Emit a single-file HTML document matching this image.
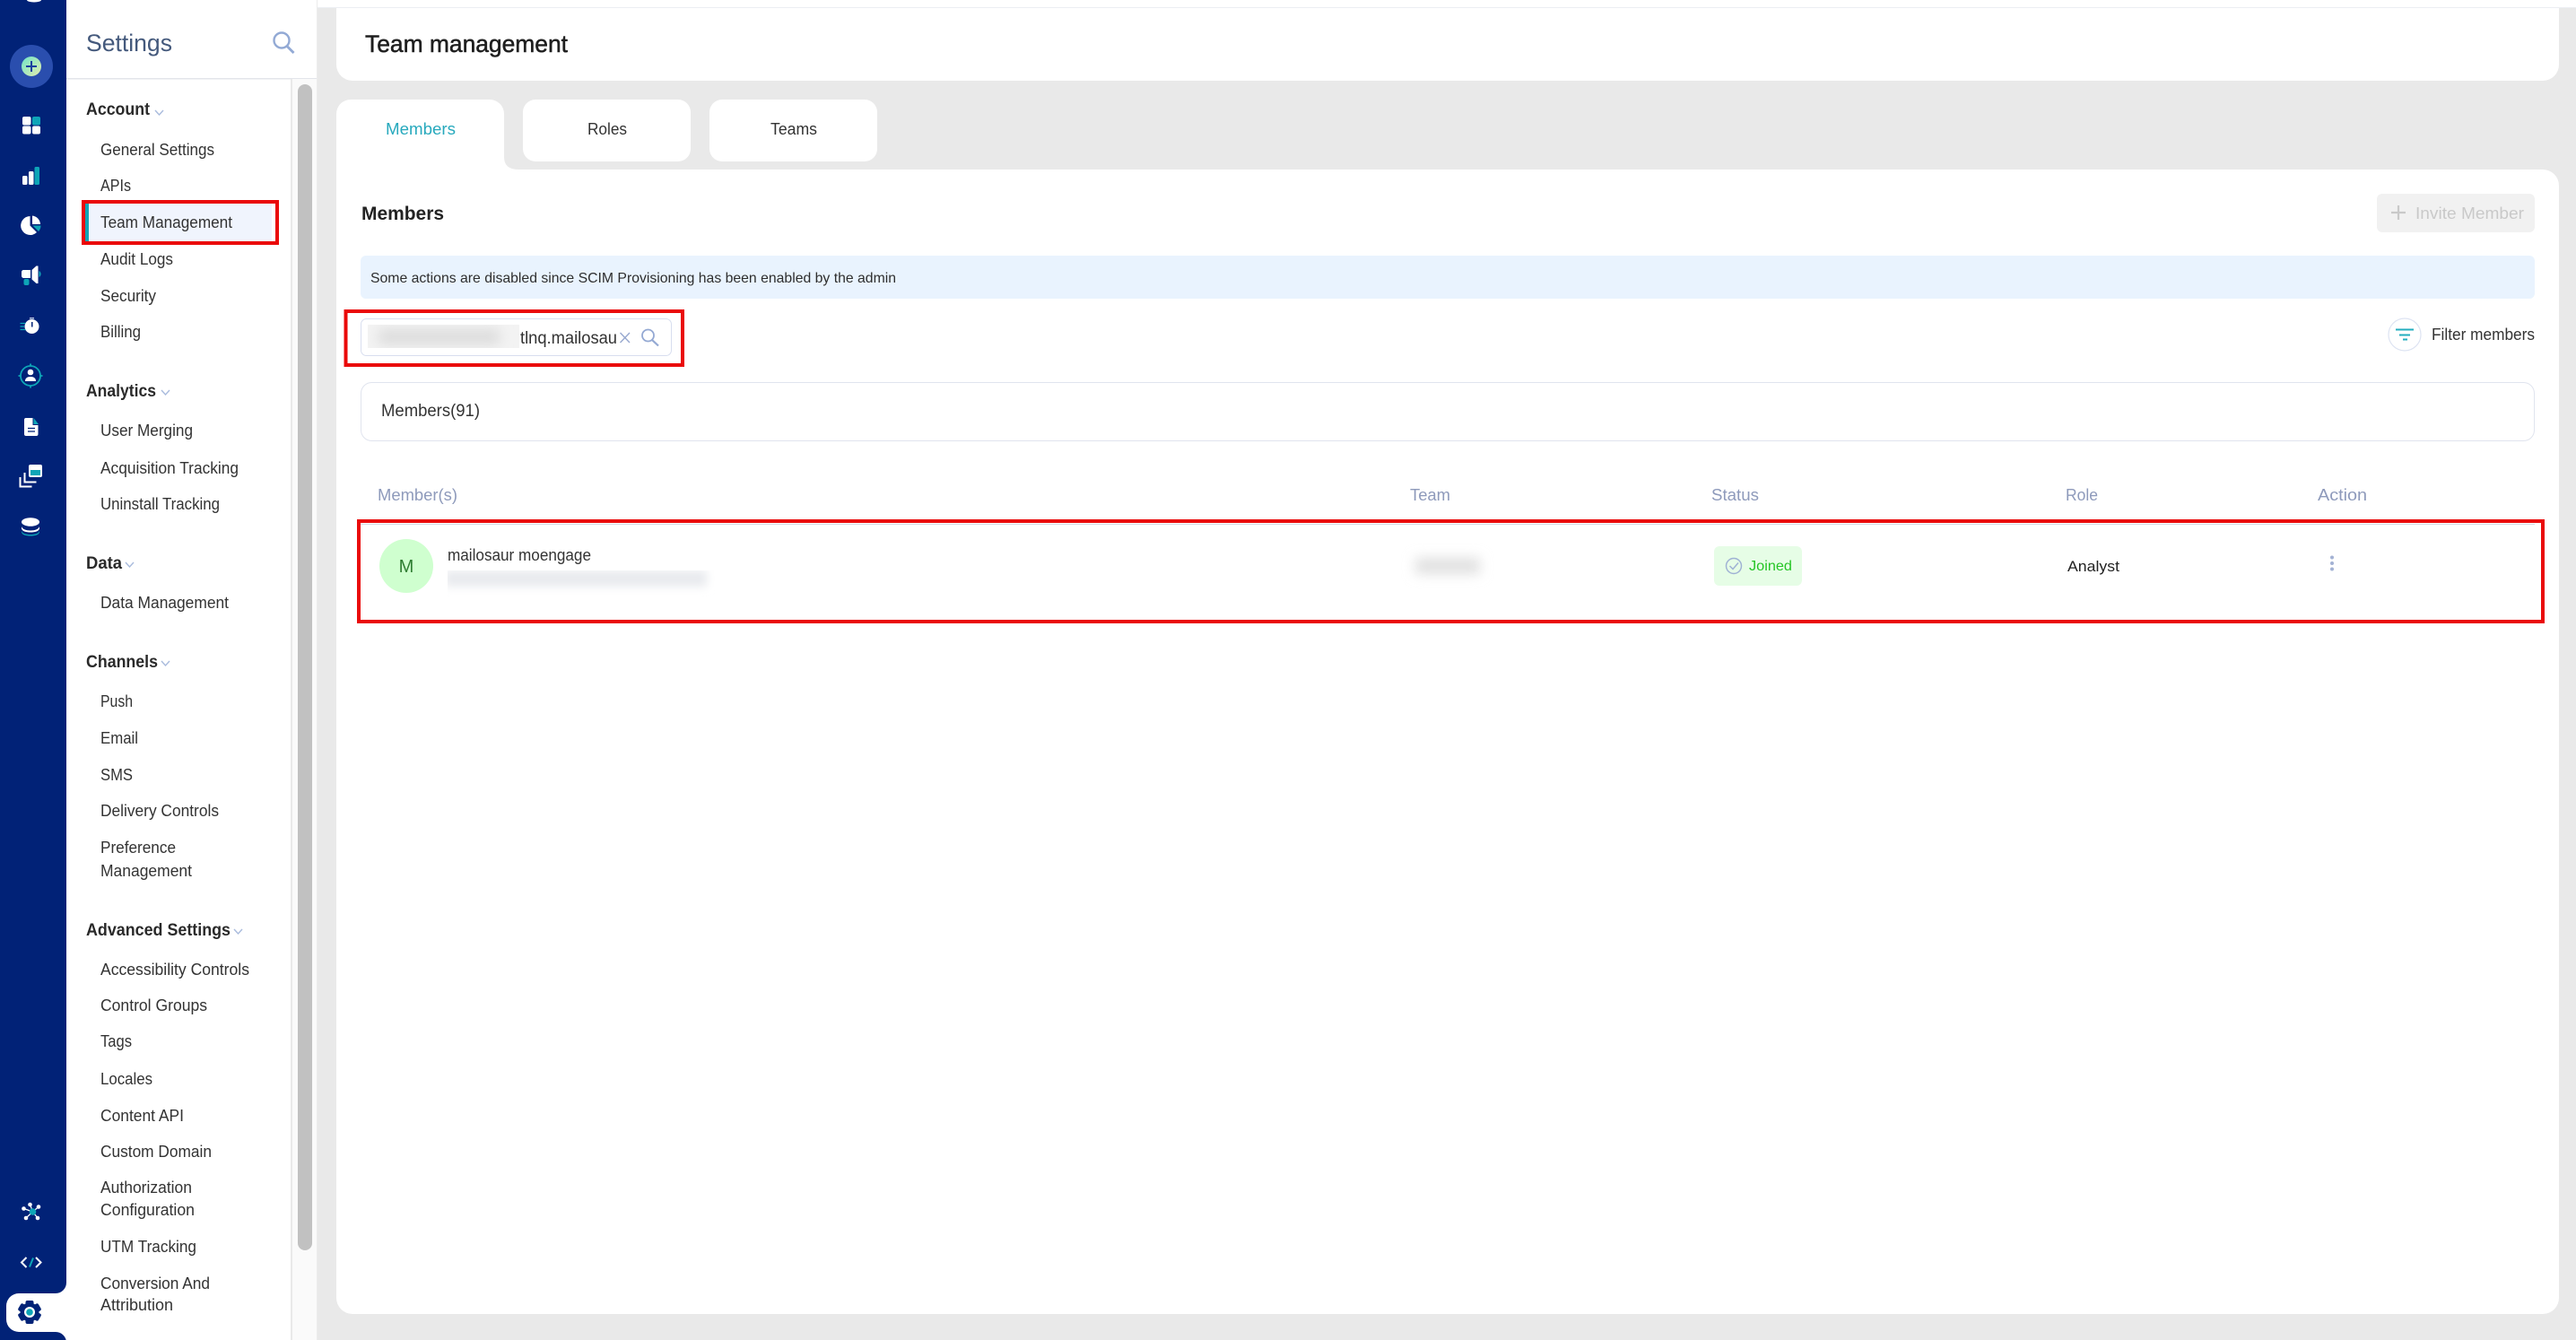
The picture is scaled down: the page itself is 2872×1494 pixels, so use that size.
<!DOCTYPE html>
<html><head><meta charset="utf-8"><title>Team management</title>
<style>
html,body{margin:0;padding:0;width:2872px;height:1494px;overflow:hidden;background:#e9e9e9}
svg{display:block}
text{font-family:"Liberation Sans",sans-serif;fill:#333;font-size:18px}
.h{font-weight:bold;font-size:19px;fill:#2a2a2a}
.th{fill:#8e9abb;font-size:18px}
</style></head><body>
<svg width="2872" height="1494" viewBox="0 0 2872 1494" xmlns="http://www.w3.org/2000/svg">
<defs>
<filter id="b" x="-40%" y="-120%" width="180%" height="340%"><feGaussianBlur stdDeviation="7"/></filter>
<filter id="b2" x="-10%" y="-60%" width="120%" height="220%"><feGaussianBlur stdDeviation="5"/></filter>
<linearGradient id="g" x1="0" y1="0" x2="1" y2="1"><stop offset="0" stop-color="#6fe3c8"/><stop offset="1" stop-color="#e4edb0"/></linearGradient>
<clipPath id="ci"><rect x="410" y="362" width="169" height="26"/></clipPath>
<clipPath id="ce"><rect x="499" y="636" width="310" height="30"/></clipPath>
</defs>

<!-- backgrounds -->
<rect width="2872" height="1494" fill="#e9e9e9"/>
<rect x="354" y="0" width="2518" height="9" fill="#fff"/>
<rect x="354" y="8" width="2518" height="1" fill="#eceef3"/>
<path d="M375 9H2853V72a18 18 0 0 1-18 18H393a18 18 0 0 1-18-18Z" fill="#fff"/>
<text x="407" y="58" textLength="226" lengthAdjust="spacingAndGlyphs" style="font-size:27px;fill:#1e1e1e;stroke:#1e1e1e;stroke-width:.5">Team management</text>

<!-- tabs -->
<path d="M375 127a16 16 0 0 1 16-16H546a16 16 0 0 1 16 16V175Q562 189 578 189H375Z" fill="#fff"/>
<rect x="583" y="111" width="187" height="69" rx="14" fill="#fff"/>
<rect x="791" y="111" width="187" height="69" rx="14" fill="#fff"/>
<text x="430" y="150" textLength="78" lengthAdjust="spacingAndGlyphs" style="fill:#27a9bd">Members</text>
<text x="655" y="150" textLength="44" lengthAdjust="spacingAndGlyphs">Roles</text>
<text x="859" y="150" textLength="52" lengthAdjust="spacingAndGlyphs">Teams</text>

<!-- main card -->
<path d="M375 189H2835a18 18 0 0 1 18 18V1447a18 18 0 0 1-18 18H393a18 18 0 0 1-18-18Z" fill="#fff"/>
<text x="403" y="245" textLength="92" lengthAdjust="spacingAndGlyphs" style="font-size:21px;font-weight:bold;fill:#222">Members</text>

<!-- invite -->
<rect x="2650" y="216" width="176" height="43" rx="6" fill="#f1f1f1"/>
<path d="M2674 229v16M2666 237h16" stroke="#c9c9c9" stroke-width="2.2" fill="none"/>
<text x="2693" y="244" textLength="121" lengthAdjust="spacingAndGlyphs" style="fill:#c9c9c9">Invite Member</text>

<!-- banner -->
<rect x="402" y="285" width="2424" height="48" rx="6" fill="#e9f3fe"/>
<text x="413" y="315" textLength="586" lengthAdjust="spacingAndGlyphs" style="font-size:16px;fill:#2e2e2e">Some actions are disabled since SCIM Provisioning has been enabled by the admin</text>

<!-- search -->
<rect x="402.5" y="355.5" width="346" height="41" rx="6" fill="#fff" stroke="#d8deef"/>
<g clip-path="url(#ci)"><rect x="410" y="362" width="169" height="26" fill="#f3f3f3"/><rect x="422" y="367" width="135" height="17" fill="#dcdcdc" filter="url(#b)"/></g>
<text x="580" y="383" textLength="108" lengthAdjust="spacingAndGlyphs" style="font-size:19px;fill:#333">tlnq.mailosau</text>
<path d="M691.500 371l10.500 11M702 371l-10.500 11" stroke="#97a8cf" stroke-width="1.400" fill="none"/>
<circle cx="722.500" cy="374" r="6.500" fill="none" stroke="#94a9d3" stroke-width="1.800"/><path d="M727 379l7 6.500" stroke="#94a9d3" stroke-width="2.200" fill="none"/>
<rect x="385.500" y="347" width="375.500" height="60" fill="none" stroke="#ea0a0a" stroke-width="4"/>

<!-- filter -->
<circle cx="2681" cy="373" r="18" fill="#fff" stroke="#dde3f2" stroke-width="1.200"/>
<path d="M2671 367.500h20M2675 373.500h12M2679 378.500h5" stroke="#22adbf" stroke-width="2" fill="none"/>
<text x="2711" y="379" textLength="115" lengthAdjust="spacingAndGlyphs" style="fill:#333">Filter members</text>

<!-- members box -->
<rect x="402.500" y="426.500" width="2423" height="65" rx="12" fill="#fff" stroke="#e0e4ee"/>
<text x="425" y="464" textLength="110" lengthAdjust="spacingAndGlyphs" style="font-size:19px;fill:#333">Members(91)</text>

<!-- table -->
<text class="th" x="421" y="558" textLength="89" lengthAdjust="spacingAndGlyphs">Member(s)</text>
<text class="th" x="1572" y="558" textLength="45" lengthAdjust="spacingAndGlyphs">Team</text>
<text class="th" x="1908" y="558" textLength="53" lengthAdjust="spacingAndGlyphs">Status</text>
<text class="th" x="2303" y="558" textLength="36" lengthAdjust="spacingAndGlyphs">Role</text>
<text class="th" x="2584" y="558" textLength="55" lengthAdjust="spacingAndGlyphs">Action</text>
<rect x="402" y="584" width="2424" height="1" fill="#d5d9e5"/>
<circle cx="453" cy="631" r="30" fill="#cfffcf"/>
<text x="453" y="638" text-anchor="middle" style="font-size:20px;fill:#2f7d32">M</text>
<text x="499" y="625" textLength="160" lengthAdjust="spacingAndGlyphs" style="fill:#333">mailosaur moengage</text>
<g clip-path="url(#ce)"><rect x="496" y="636" width="292" height="18" fill="#e8eaee" filter="url(#b2)"/></g>
<rect x="1578" y="622" width="72" height="18" fill="#e0e0e0" filter="url(#b)"/>
<rect x="1911" y="609" width="98" height="44" rx="6" fill="#e6fde6"/>
<circle cx="1933" cy="631" r="8.500" fill="none" stroke="#9fb2d4" stroke-width="1.500"/>
<path d="M1928.500 631l3.500 3.500 6-7" fill="none" stroke="#9fb2d4" stroke-width="1.500"/>
<text x="1950" y="636" textLength="48" lengthAdjust="spacingAndGlyphs" style="font-size:16px;fill:#26c526">Joined</text>
<text x="2305" y="637" textLength="58" lengthAdjust="spacingAndGlyphs" style="font-size:17px;fill:#222">Analyst</text>
<circle cx="2600" cy="621.500" r="2" fill="#a3b2d4"/><circle cx="2600" cy="628" r="2" fill="#a3b2d4"/><circle cx="2600" cy="634.500" r="2" fill="#a3b2d4"/>
<rect x="400" y="581" width="2435" height="112" fill="none" stroke="#ea0a0a" stroke-width="4"/>

<!-- sidebar -->
<rect x="74" y="0" width="280" height="1494" fill="#fff"/>
<rect x="74" y="87" width="280" height="1.500" fill="#e3e5ea"/>
<rect x="324" y="88" width="30" height="1406" fill="#fafafa"/>
<rect x="324" y="88" width="2" height="1406" fill="#e9e9e9"/>
<rect x="353" y="0" width="1" height="1494" fill="#ececec"/>
<rect x="332" y="94" width="16" height="1300" rx="8" fill="#c1c1c1"/>
<text x="96" y="57" textLength="96" lengthAdjust="spacingAndGlyphs" style="font-size:27px;fill:#44597c">Settings</text>
<circle cx="314" cy="45" r="8.500" fill="none" stroke="#93aad5" stroke-width="2.400"/><path d="M320 51.500l7.500 7.500" stroke="#93aad5" stroke-width="2.800"/>

<g fill="none" stroke="#a9bbdd" stroke-width="1.400">
<path d="M173 123l4.500 5 4.500-5"/><path d="M180 435l4.500 5 4.500-5"/><path d="M140 627l4.500 5 4.500-5"/><path d="M180 737l4.500 5 4.500-5"/><path d="M261 1036l4.500 5 4.500-5"/>
</g>
<text class="h" x="96" y="128" textLength="71" lengthAdjust="spacingAndGlyphs">Account</text>
<text x="112" y="173" textLength="127" lengthAdjust="spacingAndGlyphs">General Settings</text>
<text x="112" y="213" textLength="34" lengthAdjust="spacingAndGlyphs">APIs</text>
<rect x="95" y="227" width="208" height="42" fill="#f0f4fd"/>
<rect x="95" y="227" width="4" height="42" fill="#12a5b5"/>
<rect x="93" y="225" width="216" height="46" fill="none" stroke="#ea0a0a" stroke-width="4"/>
<text x="112" y="254" textLength="147" lengthAdjust="spacingAndGlyphs">Team Management</text>
<text x="112" y="295" textLength="81" lengthAdjust="spacingAndGlyphs">Audit Logs</text>
<text x="112" y="336" textLength="62" lengthAdjust="spacingAndGlyphs">Security</text>
<text x="112" y="376" textLength="45" lengthAdjust="spacingAndGlyphs">Billing</text>
<text class="h" x="96" y="442" textLength="78" lengthAdjust="spacingAndGlyphs">Analytics</text>
<text x="112" y="486" textLength="103" lengthAdjust="spacingAndGlyphs">User Merging</text>
<text x="112" y="528" textLength="154" lengthAdjust="spacingAndGlyphs">Acquisition Tracking</text>
<text x="112" y="568" textLength="133" lengthAdjust="spacingAndGlyphs">Uninstall Tracking</text>
<text class="h" x="96" y="634" textLength="40" lengthAdjust="spacingAndGlyphs">Data</text>
<text x="112" y="678" textLength="143" lengthAdjust="spacingAndGlyphs">Data Management</text>
<text class="h" x="96" y="744" textLength="80" lengthAdjust="spacingAndGlyphs">Channels</text>
<text x="112" y="788" textLength="36" lengthAdjust="spacingAndGlyphs">Push</text>
<text x="112" y="829" textLength="42" lengthAdjust="spacingAndGlyphs">Email</text>
<text x="112" y="870" textLength="36" lengthAdjust="spacingAndGlyphs">SMS</text>
<text x="112" y="910" textLength="132" lengthAdjust="spacingAndGlyphs">Delivery Controls</text>
<text x="112" y="951" textLength="84" lengthAdjust="spacingAndGlyphs">Preference</text>
<text x="112" y="977" textLength="102" lengthAdjust="spacingAndGlyphs">Management</text>
<text class="h" x="96" y="1043" textLength="161" lengthAdjust="spacingAndGlyphs">Advanced Settings</text>
<text x="112" y="1087" textLength="166" lengthAdjust="spacingAndGlyphs">Accessibility Controls</text>
<text x="112" y="1127" textLength="119" lengthAdjust="spacingAndGlyphs">Control Groups</text>
<text x="112" y="1167" textLength="35" lengthAdjust="spacingAndGlyphs">Tags</text>
<text x="112" y="1209" textLength="58" lengthAdjust="spacingAndGlyphs">Locales</text>
<text x="112" y="1250" textLength="93" lengthAdjust="spacingAndGlyphs">Content API</text>
<text x="112" y="1290" textLength="124" lengthAdjust="spacingAndGlyphs">Custom Domain</text>
<text x="112" y="1330" textLength="102" lengthAdjust="spacingAndGlyphs">Authorization</text>
<text x="112" y="1355" textLength="105" lengthAdjust="spacingAndGlyphs">Configuration</text>
<text x="112" y="1396" textLength="107" lengthAdjust="spacingAndGlyphs">UTM Tracking</text>
<text x="112" y="1437" textLength="122" lengthAdjust="spacingAndGlyphs">Conversion And</text>
<text x="112" y="1461" textLength="81" lengthAdjust="spacingAndGlyphs">Attribution</text>

<!-- rail -->
<rect x="0" y="0" width="74" height="1494" fill="#012277"/>
<ellipse cx="38" cy="0" rx="8" ry="2.500" fill="#fff"/>
<circle cx="35" cy="74" r="24" fill="#2a4eae"/>
<circle cx="35" cy="74" r="11" fill="url(#g)"/>
<path d="M35 68v12M29 74h12" stroke="#1d3f9f" stroke-width="2"/>
<!-- grid -->
<rect x="25" y="130" width="9.500" height="9.500" rx="2" fill="#fff"/><rect x="36" y="130" width="9" height="9.500" rx="2" fill="#0ea5b7"/>
<rect x="25" y="140.500" width="9.500" height="9" rx="2" fill="#fff"/><rect x="36" y="140.500" width="9" height="9" rx="2" fill="#fff"/>
<!-- bars -->
<rect x="25" y="196" width="5.500" height="10" rx="1.500" fill="#fff"/><rect x="32" y="191" width="5.500" height="15" rx="1.500" fill="#fff"/><rect x="38.500" y="186" width="5.500" height="20" rx="1.500" fill="#0ea5b7"/>
<!-- pie -->
<path d="M33.500 241v10.500l7.500 7.500a10.500 10.500 0 1 1-7.500-18Z" fill="#fff"/>
<path d="M36 240.500a10 10 0 0 1 9 9.500h-9Z" fill="#fff"/>
<path d="M36.500 251.500h9a10 10 0 0 1-2.500 6.500Z" fill="#0ea5b7"/>
<!-- megaphone -->
<path d="M26 301h8v9h-8a2.500 2.500 0 0 1-2-2.500v-4a2.500 2.500 0 0 1 2-2.500Z" fill="#fff"/>
<path d="M35.500 301l5-4.500h2v19.500h-2l-5-4.500Z" fill="#fff"/>
<path d="M43.500 302a4 4 0 0 1 0 7Z" fill="#0ea5b7"/>
<rect x="26.500" y="311" width="6" height="7" rx="2" fill="#0ea5b7"/>
<!-- stopwatch -->
<rect x="33" y="354" width="5" height="1.500" fill="#b8c4e0"/>
<circle cx="35.500" cy="364" r="8" fill="#fff"/>
<rect x="35" y="359" width="1.500" height="5.500" fill="#012277"/>
<path d="M22.500 360.500h6M22.500 364h4.500M22.500 367.500h6" stroke="#0ea5b7" stroke-width="1.300"/>
<!-- target user -->
<circle cx="34" cy="419" r="11" fill="none" stroke="#0ea5b7" stroke-width="1.800"/>
<path d="M34 405.500v3M34 429.500v3M20.500 419h3M44.500 419h3" stroke="#0ea5b7" stroke-width="1.800"/>
<circle cx="34" cy="415" r="3.300" fill="#fff"/>
<path d="M28 425c0-3.500 2.500-5 6-5s6 1.500 6 5Z" fill="#fff"/>
<!-- doc -->
<path d="M29 466h7.500v8h6v10a2 2 0 0 1-2 2H29a2 2 0 0 1-2-2V468a2 2 0 0 1 2-2Z" fill="#fff"/>
<path d="M37.500 466l5.500 7h-5.500Z" fill="#0ea5b7"/>
<path d="M31 477.500h8M31 481h8" stroke="#012277" stroke-width="1.300"/>
<!-- cards -->
<path d="M22.500 532v10.500h13" fill="none" stroke="#fff" stroke-width="2"/>
<path d="M27.500 527v10.500h13" fill="none" stroke="#fff" stroke-width="2"/>
<rect x="32" y="518" width="15" height="14" rx="2" fill="#fff"/>
<rect x="34" y="524" width="11" height="6" fill="#0ea5b7"/>
<!-- db -->
<ellipse cx="34" cy="582" rx="10" ry="4.800" fill="#fff"/>
<path d="M24 587c1 3 5 4.500 10 4.500s9-1.500 10-4.500v2.500c-1 3-5 4-10 4s-9-1-10-4Z" fill="#fff"/>
<path d="M24 592c1 3 5 4 10 4s9-1 10-4v1.500c-1 3-5 4-10 4s-9-1-10-4Z" fill="#0ea5b7"/>
<!-- network -->
<g stroke="#fff" stroke-width="1.200"><path d="M36.500 1351L26.500 1347.500M36.500 1351L33.500 1343M36.500 1351L43 1345.500M36.500 1351L29 1358M36.500 1351L42 1358"/></g>
<g fill="#fff"><circle cx="26.500" cy="1347.500" r="2.300"/><circle cx="33.500" cy="1343" r="2.300"/><circle cx="43" cy="1345.500" r="2.300"/><circle cx="29" cy="1358" r="2.300"/><circle cx="42" cy="1358" r="2.300"/></g>
<circle cx="36.500" cy="1351" r="3.800" fill="#0ea5b7"/>
<!-- code -->
<path d="M29.500 1402l-5.500 5.500 5.500 5.500M40 1402l5.500 5.500-5.500 5.500" fill="none" stroke="#fff" stroke-width="2"/>
<path d="M37 1402.500l-4 10" stroke="#0ea5b7" stroke-width="2"/>
<!-- active tab -->
<path d="M74 1430v12H62a12 12 0 0 0 12-12Z" fill="#fff"/>
<path d="M74 1497v-12H62a12 12 0 0 1 12 12Z" fill="#fff"/>
<path d="M74 1442H21a14 14 0 0 0-14 14v15a14 14 0 0 0 14 14H74Z" fill="#fff"/>
<!-- gear -->
<g fill="#012277">
<rect x="28.500" y="1450" width="9" height="26" rx="2"/>
<rect x="28.500" y="1450" width="9" height="26" rx="2" transform="rotate(60 33 1463)"/>
<rect x="28.500" y="1450" width="9" height="26" rx="2" transform="rotate(120 33 1463)"/>
<circle cx="33" cy="1463" r="10.500"/>
</g>
<circle cx="33" cy="1463" r="6" fill="#fff"/>
<circle cx="33" cy="1463" r="3.800" fill="#0ea5b7"/>
</svg>
</body></html>
